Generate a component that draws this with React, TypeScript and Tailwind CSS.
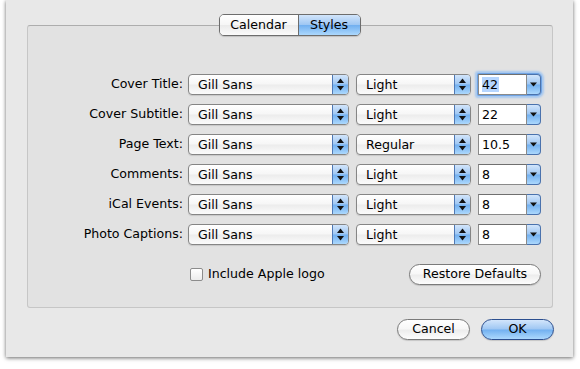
import React from 'react';

const rows = [
  { label: 'Cover Title:', weight: 'Light', size: '42', focused: true },
  { label: 'Cover Subtitle:', weight: 'Light', size: '22' },
  { label: 'Page Text:', weight: 'Regular', size: '10.5' },
  { label: 'Comments:', weight: 'Light', size: '8' },
  { label: 'iCal Events:', weight: 'Light', size: '8' },
  { label: 'Photo Captions:', weight: 'Light', size: '8' },
];

const aqua =
  'bg-[linear-gradient(to_bottom,#d2e5fb_0%,#9fc7f3_48%,#72b0f0_52%,#acd8fd_100%)]';

function UpDown() {
  return (
    <svg width="7" height="13" viewBox="0 0 7 13">
      <path d="M3.5 0.5 L7 5 L0 5 Z" fill="#111" />
      <path d="M3.5 12.5 L7 8 L0 8 Z" fill="#111" />
    </svg>
  );
}

function Popup({ value, width }: { value: string; width: string }) {
  return (
    <div
      className={`${width} h-[21px] flex rounded-[4px] border border-[#858585] overflow-hidden bg-[linear-gradient(to_bottom,#ffffff_0%,#f6f6f6_48%,#ececec_52%,#fbfbfb_100%)] shadow-[0_1px_1px_rgba(0,0,0,0.12)]`}
    >
      <span className="flex-1 pl-[9px] leading-[19px]">{value}</span>
      <span className={`w-[16px] border-l border-[#4f79b5] ${aqua} flex items-center justify-center`}>
        <UpDown />
      </span>
    </div>
  );
}

function Combo({ value, focused }: { value: string; focused?: boolean }) {
  return (
    <div
      className={`w-[63px] h-[21px] flex rounded-r-[4px] ${
        focused ? 'shadow-[0_0_0_1px_#6fa3e3,0_0_2px_3px_#a6c8f0] rounded-l-[1px]' : ''
      }`}
    >
      <div className="flex-1 bg-white border border-[#8a8a8a] border-t-[#6f6f6f] pl-[3px] leading-[19px]">
        <span className={focused ? 'bg-[#b5d5ff] pr-[1px]' : ''}>{value}</span>
      </div>
      <div
        className={`w-[14px] ${aqua} border border-l-0 border-[#4a72ad] rounded-r-[4px] flex items-center justify-center`}
      >
        <svg width="7" height="5" viewBox="0 0 7 5">
          <path d="M0 0.5 L7 0.5 L3.5 4.5 Z" fill="#111" />
        </svg>
      </div>
    </div>
  );
}

function PushButton({ label, width, primary }: { label: string; width: string; primary?: boolean }) {
  return (
    <div
      className={`${width} h-[21px] rounded-full border flex items-center justify-center leading-none shadow-[0_1px_1px_rgba(0,0,0,0.15)] ${
        primary
          ? `border-[#2c4f8f] ${aqua}`
          : 'border-[#7a7a7a] bg-[linear-gradient(to_bottom,#ffffff_0%,#f7f7f7_48%,#ececec_52%,#fdfdfd_100%)]'
      }`}
    >
      {label}
    </div>
  );
}

export default function App() {
  return (
    <div className="w-[580px] h-[369px] bg-white text-black text-[12.6px] font-['Lucida_Grande','DejaVu_Sans',sans-serif]">
      <div className="ml-[6px] w-[567px] h-[357px] bg-[#e8e8e8] shadow-[0_1px_4px_rgba(0,0,0,0.6)] flex flex-col">
        {/* tabs */}
        <div className="pt-[14px] -mb-[11px] flex justify-center relative z-10">
          <div className="h-[22px] flex rounded-[5px] border border-[#6d6d6d] overflow-hidden shadow-[0_1px_1px_rgba(0,0,0,0.15)]">
            <div className="w-[79px] flex items-center justify-center bg-[linear-gradient(to_bottom,#ffffff_0%,#f6f6f6_48%,#ebebeb_52%,#fbfbfb_100%)] border-r border-[#6d6d6d]">
              Calendar
            </div>
            <div className={`w-[61px] flex items-center justify-center ${aqua}`}>Styles</div>
          </div>
        </div>

        {/* group box */}
        <div className="ml-[21px] w-[526px] h-[283px] rounded-[3px] border border-[#c6c6c6] border-t-[#adadad] bg-[#e2e2e2] pt-[48px] flex flex-col">
          <div className="flex flex-col gap-[9px]">
            {rows.map((r) => (
              <div key={r.label} className="flex items-center h-[21px]">
                <span className="w-[155px] text-right">{r.label}</span>
                <div className="ml-[5px]">
                  <Popup value="Gill Sans" width="w-[161px]" />
                </div>
                <div className="ml-[7px]">
                  <Popup value={r.weight} width="w-[115px]" />
                </div>
                <div className="ml-[7px]">
                  <Combo value={r.size} focused={r.focused} />
                </div>
              </div>
            ))}
          </div>

          <div className="mt-[19px] flex items-center h-[21px]">
            <div className="ml-[162px] w-[13px] h-[13px] rounded-[2px] border border-[#8c8c8c] bg-[linear-gradient(to_bottom,#ffffff,#ececec)]" />
            <span className="ml-[5px]">Include Apple logo</span>
            <div className="ml-auto mr-[11px]">
              <PushButton label="Restore Defaults" width="w-[132px]" />
            </div>
          </div>
        </div>

        {/* bottom buttons */}
        <div className="mt-[11px] flex justify-end gap-[11px] pr-[19px]">
          <PushButton label="Cancel" width="w-[73px]" />
          <PushButton label="OK" width="w-[73px]" primary />
        </div>
      </div>
    </div>
  );
}
